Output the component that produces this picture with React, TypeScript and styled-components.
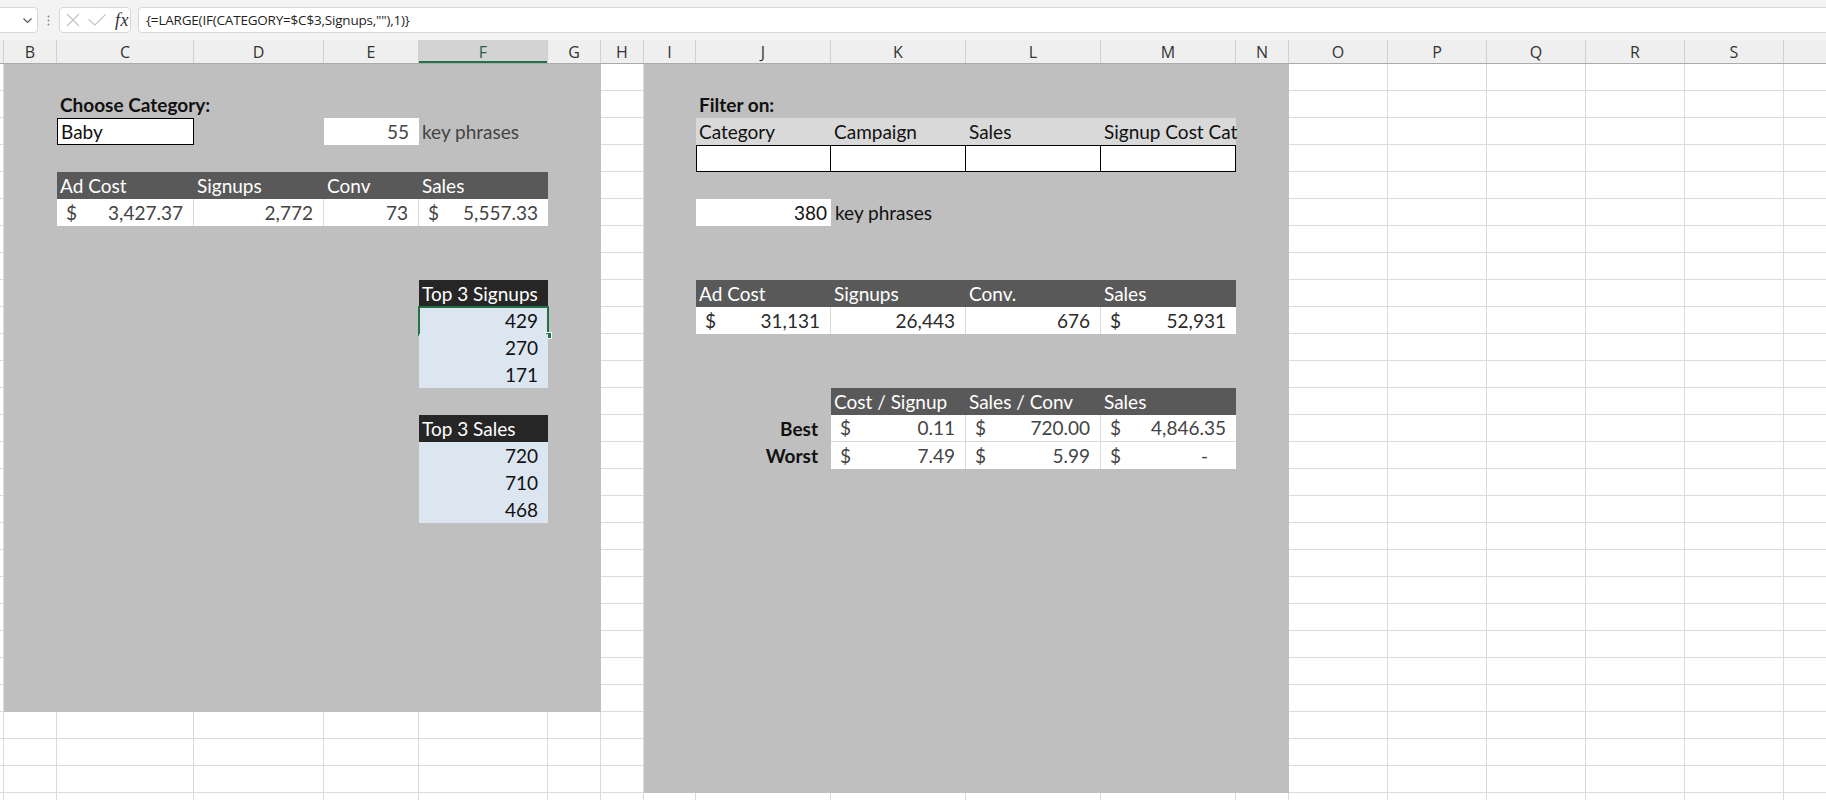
import { FC, ReactNode } from "react";
import styled, { createGlobalStyle, css } from "styled-components";

// sheet geometry: column letter + width in px (A and T are only partly in view)
const COLUMNS: [string, number][] = [
    ["A", 4], ["B", 53], ["C", 137], ["D", 130], ["E", 95], ["F", 129], ["G", 53],
    ["H", 43], ["I", 52], ["J", 135], ["K", 135], ["L", 135], ["M", 135], ["N", 53],
    ["O", 99], ["P", 99], ["Q", 99], ["R", 99], ["S", 99], ["T", 99],
]
const TEMPLATE = COLUMNS.map(([, w]) => `${w}px`).join(" ")
const ROW_COUNT = 28
const ROW_HEIGHT = 27
const colIndex = (letter: string) => COLUMNS.findIndex(([name]) => name === letter) + 1
// columns whose header letter is out of view
const HIDDEN_LABELS = ["A", "T"]

const GRID_LINE = "#dadada"
const CELL_FONT = `Lato, "Open Sans", sans-serif`
const UI_FONT = `"Open Sans", "Noto Sans", sans-serif`

const GlobalStyle = createGlobalStyle`
    html, body {
        margin: 0;
        padding: 0;
        background: #fff;
    }
    body {
        overflow: hidden;
        font-family: ${CELL_FONT};
    }
`

const Page = styled.div`
    width: 1826px;
    height: 800px;
    overflow: hidden;
    background: #fff;
`

// formula bar
const TopBar = styled.div`
    height: 40px;
    box-sizing: border-box;
    padding-top: 7px;
    background: #f3f3f3;
    display: flex;
    align-items: flex-start;
`

const BarBox = styled.div`
    height: 26px;
    box-sizing: border-box;
    background: #fff;
    border: 1px solid #d6d6d6;
    border-radius: 4px;
    display: flex;
    align-items: center;
`

const NameBox = styled(BarBox)`
    width: 48px;
    margin-left: -10px;
    justify-content: flex-end;
    padding-right: 5px;
`

const Dots = styled.div`
    width: 21px;
    height: 26px;
    display: flex;
    align-items: center;
    justify-content: center;
`

const FuncBox = styled(BarBox)`
    width: 72px;
    padding-left: 6px;
    gap: 8px;
`

const Fx = styled.span`
    font-family: "Liberation Serif", "DejaVu Serif", serif;
    font-style: italic;
    font-size: 18px;
    color: #333;
    margin-left: 1px;
    letter-spacing: 0.5px;
`

const FormulaBox = styled(BarBox)`
    flex: 1;
    margin-left: 7px;
    margin-right: -10px;
    padding-left: 7px;
    font-family: ${UI_FONT};
    font-size: 13.5px;
    letter-spacing: -0.2px;
    color: #1f1f1f;
`

// column headers
const HeaderRow = styled.div`
    display: grid;
    grid-template-columns: ${TEMPLATE};
    height: 24px;
    box-sizing: border-box;
    background: #efefef;
    border-bottom: 1px solid #ababab;
    overflow: hidden;
`

const ColHead = styled.div<{ $active?: boolean }>`
    border-right: 1px solid #d0d0d0;
    display: flex;
    align-items: center;
    justify-content: center;
    font-family: ${UI_FONT};
    font-size: 16px;
    color: #333;

    ${({ $active }) => $active && css`
        background: #d3d3d3;
        color: #25613d;
        box-shadow: inset 0 -2px 0 #217346;
    `}
`

// the sheet itself
const Sheet = styled.div`
    display: grid;
    grid-template-columns: ${TEMPLATE};
    grid-template-rows: repeat(${ROW_COUNT}, ${ROW_HEIGHT}px);
`

const ColumnLines = styled.div<{ $col: number }>`
    grid-column: ${({ $col }) => $col};
    grid-row: 1 / -1;
    border-right: 1px solid ${GRID_LINE};
    background: repeating-linear-gradient(
        to bottom,
        transparent 0 ${ROW_HEIGHT - 1}px,
        ${GRID_LINE} ${ROW_HEIGHT - 1}px ${ROW_HEIGHT}px
    );
`

const Panel = styled.div<{ $from: string, $to: string, $rows: number }>`
    grid-column: ${({ $from }) => colIndex($from)} / ${({ $to }) => colIndex($to) + 1};
    grid-row: 1 / span ${({ $rows }) => $rows};
    background: #bfbfbf;
`

interface CellProps {
    $col: string,
    $row: number,
    $span?: number,
    $bg?: string,
    $color?: string,
    $align?: "left" | "right" | "split",
    $bold?: boolean,
    $pl?: number,
    $pr?: number,
    $divider?: boolean,
    $rule?: boolean,
    $boxed?: boolean,
    $first?: boolean,
}

const justify = { left: "flex-start", right: "flex-end", split: "space-between" }

const Cell = styled.div<CellProps>`
    grid-column: ${({ $col }) => colIndex($col)} / span ${({ $span }) => $span ?? 1};
    grid-row: ${({ $row }) => $row};
    position: relative;
    display: flex;
    align-items: flex-end;
    justify-content: ${({ $align }) => justify[$align ?? "left"]};
    box-sizing: border-box;
    padding: 0 ${({ $pr }) => $pr ?? 3}px 2px ${({ $pl }) => $pl ?? 3}px;
    background: ${({ $bg }) => $bg ?? "transparent"};
    color: ${({ $color }) => $color ?? "#111"};
    font-family: ${CELL_FONT};
    font-size: 19px;
    line-height: 22px;
    font-weight: ${({ $bold }) => $bold ? 700 : 400};
    white-space: nowrap;
    border-right: ${({ $divider }) => $divider ? "1px solid #d9d9d9" : "none"};
    border-bottom: ${({ $rule }) => $rule ? "1px solid #d9d9d9" : "none"};

    ${({ $boxed, $first }) => $boxed && css`
        border: 1px solid #000;
        border-left: ${$first ? "1px solid #000" : "none"};
        padding-bottom: 1px;
    `}
`

const Selection = styled.div`
    position: absolute;
    inset: -1px -1px -2px -1px;
    border: 2px solid #217346;
    pointer-events: none;
`

const FillHandle = styled.div`
    position: absolute;
    right: -5px;
    bottom: -5px;
    width: 5px;
    height: 5px;
    background: #217346;
    border: 1px solid #fff;
`

const DARK = "#595959"
const DARKER = "#262626"
const LIGHT_BLUE = "#dce6f1"

interface AcctProps extends Omit<CellProps, "$align"> {
    amount: string,
}

const Acct: FC<AcctProps> = ({ amount, ...props }) => (
    <Cell $align="split" $pl={9} $pr={10} $bg="#fff" {...props}>
        <span>$</span>
        <span>{amount}</span>
    </Cell>
)

const Head: FC<{ col: string, row: number, bg?: string, children: ReactNode }> = ({ col, row, bg = DARK, children }) => (
    <Cell $col={col} $row={row} $bg={bg} $color="#fff">{children}</Cell>
)

const App: FC = () => {
    const leftText = "#444"
    const rightText = "#2a2a2a"

    return (
        <Page>
            <GlobalStyle />
            <TopBar>
                <NameBox>
                    <svg width="9" height="5" viewBox="0 0 9 5">
                        <path d="M0.5 0.5 L4.5 4.5 L8.5 0.5" fill="none" stroke="#555" strokeWidth="1.1" />
                    </svg>
                </NameBox>
                <Dots>
                    <svg width="3" height="11" viewBox="0 0 3 11">
                        <circle cx="1.5" cy="1.5" r="1" fill="#8a8a8a" />
                        <circle cx="1.5" cy="5.5" r="1" fill="#8a8a8a" />
                        <circle cx="1.5" cy="9.5" r="1" fill="#8a8a8a" />
                    </svg>
                </Dots>
                <FuncBox>
                    <svg width="14" height="14" viewBox="0 0 14 14">
                        <path d="M1 1 L13 13 M13 1 L1 13" stroke="#c2c2c2" strokeWidth="1.1" />
                    </svg>
                    <svg width="18" height="12" viewBox="0 0 18 12">
                        <path d="M0.5 5.5 L7 11 L17.5 0.5" fill="none" stroke="#c2c2c2" strokeWidth="1.1" />
                    </svg>
                    <Fx>fx</Fx>
                </FuncBox>
                <FormulaBox>{'{=LARGE(IF(CATEGORY=$C$3,Signups,""),1)}'}</FormulaBox>
            </TopBar>

            <HeaderRow>
                {COLUMNS.map(([name]) => (
                    <ColHead key={name} $active={name === "F"}>
                        {HIDDEN_LABELS.includes(name) ? "" : name}
                    </ColHead>
                ))}
            </HeaderRow>

            <Sheet>
                {COLUMNS.map(([name], i) => <ColumnLines key={name} $col={i + 1} />)}

                <Panel $from="B" $to="G" $rows={24} />
                <Panel $from="I" $to="N" $rows={27} />

                {/* left panel: category summary */}
                <Cell $col="C" $row={2} $bold>Choose Category:</Cell>
                <Cell $col="C" $row={3} $bg="#fff" $boxed $first>Baby</Cell>
                <Cell $col="E" $row={3} $bg="#fff" $align="right" $pr={10} $color={leftText}>55</Cell>
                <Cell $col="F" $row={3} $color={leftText}>key phrases</Cell>

                <Head col="C" row={5}>Ad Cost</Head>
                <Head col="D" row={5}>Signups</Head>
                <Head col="E" row={5}>Conv</Head>
                <Head col="F" row={5}>Sales</Head>
                <Acct $col="C" $row={6} $color={leftText} $divider amount="3,427.37" />
                <Cell $col="D" $row={6} $bg="#fff" $align="right" $pr={10} $color={leftText} $divider>2,772</Cell>
                <Cell $col="E" $row={6} $bg="#fff" $align="right" $pr={10} $color={leftText} $divider>73</Cell>
                <Acct $col="F" $row={6} $color={leftText} amount="5,557.33" />

                <Head col="F" row={9} bg={DARKER}>Top 3 Signups</Head>
                <Cell $col="F" $row={10} $bg={LIGHT_BLUE} $align="right" $pr={10}>
                    429
                    <Selection>
                        <FillHandle />
                    </Selection>
                </Cell>
                <Cell $col="F" $row={11} $bg={LIGHT_BLUE} $align="right" $pr={10}>270</Cell>
                <Cell $col="F" $row={12} $bg={LIGHT_BLUE} $align="right" $pr={10}>171</Cell>

                <Head col="F" row={14} bg={DARKER}>Top 3 Sales</Head>
                <Cell $col="F" $row={15} $bg={LIGHT_BLUE} $align="right" $pr={10}>720</Cell>
                <Cell $col="F" $row={16} $bg={LIGHT_BLUE} $align="right" $pr={10}>710</Cell>
                <Cell $col="F" $row={17} $bg={LIGHT_BLUE} $align="right" $pr={10}>468</Cell>

                {/* right panel: filters */}
                <Cell $col="J" $row={2} $bold>Filter on:</Cell>
                <Cell $col="J" $row={3} $bg="#d9d9d9">Category</Cell>
                <Cell $col="K" $row={3} $bg="#d9d9d9">Campaign</Cell>
                <Cell $col="L" $row={3} $bg="#d9d9d9">Sales</Cell>
                <Cell $col="M" $row={3} $bg="#d9d9d9">Signup Cost Cat</Cell>
                <Cell $col="J" $row={4} $bg="#fff" $boxed $first />
                <Cell $col="K" $row={4} $bg="#fff" $boxed />
                <Cell $col="L" $row={4} $bg="#fff" $boxed />
                <Cell $col="M" $row={4} $bg="#fff" $boxed />

                <Cell $col="J" $row={6} $bg="#fff" $align="right" $pr={4}>380</Cell>
                <Cell $col="K" $row={6} $pl={4}>key phrases</Cell>

                <Head col="J" row={9}>Ad Cost</Head>
                <Head col="K" row={9}>Signups</Head>
                <Head col="L" row={9}>Conv.</Head>
                <Head col="M" row={9}>Sales</Head>
                <Acct $col="J" $row={10} $color={rightText} $divider amount="31,131" />
                <Cell $col="K" $row={10} $bg="#fff" $align="right" $pr={10} $color={rightText} $divider>26,443</Cell>
                <Cell $col="L" $row={10} $bg="#fff" $align="right" $pr={10} $color={rightText} $divider>676</Cell>
                <Acct $col="M" $row={10} $color={rightText} amount="52,931" />

                <Head col="K" row={13}>Cost / Signup</Head>
                <Head col="L" row={13}>Sales / Conv</Head>
                <Head col="M" row={13}>Sales</Head>
                <Cell $col="J" $row={14} $align="right" $pr={13} $bold>Best</Cell>
                <Acct $col="K" $row={14} $color={leftText} $divider $rule amount="0.11" />
                <Acct $col="L" $row={14} $color={leftText} $divider $rule amount="720.00" />
                <Acct $col="M" $row={14} $color={leftText} $rule amount="4,846.35" />
                <Cell $col="J" $row={15} $align="right" $pr={13} $bold>Worst</Cell>
                <Acct $col="K" $row={15} $color={leftText} $divider amount="7.49" />
                <Acct $col="L" $row={15} $color={leftText} $divider amount="5.99" />
                <Acct $col="M" $row={15} $color={leftText} $pr={28} amount="-" />
            </Sheet>
        </Page>
    )
}

export default App
